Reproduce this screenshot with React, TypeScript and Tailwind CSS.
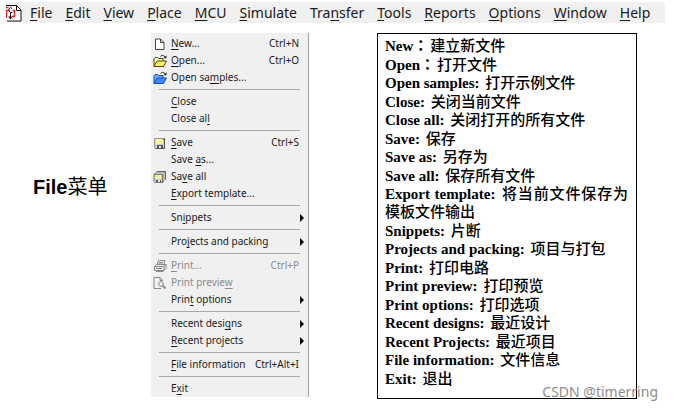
import type { ReactNode } from 'react';
import { clsx } from 'clsx';

interface MenuEntry {
  label: string;
  // position of the underlined access key
  mnemonic: number;
  icon?: ReactNode;
  shortcut?: string;
  submenu?: boolean;
  disabled?: boolean;
}

const NewIcon = () => (
  <svg viewBox="0 0 14 14" className="size-3.5">
    <path d="M2.500 2H7.500L11 5.500V12.500H2.500Z" fill="#fff" stroke="#444" />
    <path d="M7.500 2V5.500H11" fill="none" stroke="#444" />
  </svg>
);

const FolderIcon = ({ front, back, line }: { front: string; back: string; line: string }) => (
  <svg viewBox="0 0 14 14" className="size-3.5">
    <path d="M1 12.500V4.500L2 3.500H4.500L5.500 4.500H10V7" fill={back} stroke={line} />
    <path d="M1 12.500L4 7H13.500L10.500 12.500Z" fill={front} stroke={line} />
    <path d="M7.500 2.500C8.500 1 10.500 1 12 2.800" fill="none" stroke="#222" />
    <path d="M13.500 1.200V4.300H10.500Z" fill="#222" />
  </svg>
);

const SaveIcon = () => (
  <svg viewBox="0 0 14 14" className="size-3.5">
    <path d="M1.500 2.500H11.500V12.500H2.500L1.500 11.500Z" fill="#d0d0d0" stroke="#999" />
    <path d="M11.500 2.500V12.500H2.500" fill="none" stroke="#555" />
    <rect x="3" y="3" width="7" height="5" fill="#f7f59a" />
    <rect x="4" y="9" width="6" height="3" fill="#555" />
    <rect x="6" y="10" width="2" height="2" fill="#eee" />
    <rect x="10" y="3" width="1" height="1" fill="#c33" />
  </svg>
);

const SaveAllIcon = () => (
  <svg viewBox="0 0 14 14" className="size-3.5">
    <path d="M1 4.500L4 1.500H12.500V9L9.500 12.500" fill="#999" stroke="#666" />
    <path d="M2.500 3.200H11V11" fill="none" stroke="#ddd" />
    <path d="M1 4.500H9.500V12.500H2L1 11.500Z" fill="#d0d0d0" stroke="#777" />
    <rect x="2" y="5" width="6" height="4" fill="#f7f59a" />
    <rect x="3" y="10" width="5" height="2" fill="#555" />
    <rect x="5" y="10" width="2" height="2" fill="#eee" />
  </svg>
);

const PrintIcon = () => (
  <svg viewBox="0 0 14 14" className="size-3.5" fill="#eee" stroke="#8a8a8a">
    <path d="M4 6L5.500 1.500H12L10.500 6Z" />
    <path d="M6 3.500H10M5.500 5H9.500" />
    <path d="M1.500 7.500L3.500 5.500H13L11 7.500Z" />
    <path d="M1.500 7.500H11V11.500H1.500ZM11 7.500L13 5.500V9.500L11 11.500" />
    <path d="M3 9.500H9M3 12.500H10.500" />
  </svg>
);

const PreviewIcon = () => (
  <svg viewBox="0 0 14 14" className="size-3.5" fill="none" stroke="#8a8a8a">
    <path d="M9.500 5V4L7 1.500H1V12.500H8" />
    <path d="M7 1.500V4.500H9.500" />
    <circle cx="8" cy="8" r="2.300" />
    <path d="M9.800 9.800L12.500 12.500" strokeWidth="2" />
  </svg>
);

const DocumentIcon = () => (
  <svg viewBox="0 0 16 18" className="h-[18px] w-4" fill="none">
    <path d="M0 1.500H10.500L15 6V17H1" fill="#fff" stroke="#111" />
    <path d="M10.500 1.500V6.500H15" stroke="#111" />
    <path d="M0 3.500H2.500M.5 6V14M0 6.500H3M6.500 6.500H8.500V12.500H6" stroke="#ee1c25" strokeWidth="1.500" />
    <path d="M6 4.500L4.500 3.500L3 5V7L4.500 8.500H6.500M4.500 9V13" stroke="#111" />
    <path d="M2 12.500H6.500L4.500 15.500Z" fill="#111" />
  </svg>
);

const menuBar = [
  { label: 'File', mnemonic: 0 },
  { label: 'Edit', mnemonic: 0 },
  { label: 'View', mnemonic: 0 },
  { label: 'Place', mnemonic: 0 },
  { label: 'MCU', mnemonic: 0 },
  { label: 'Simulate', mnemonic: 0 },
  { label: 'Transfer', mnemonic: 3 },
  { label: 'Tools', mnemonic: 0 },
  { label: 'Reports', mnemonic: 0 },
  { label: 'Options', mnemonic: 0 },
  { label: 'Window', mnemonic: 0 },
  { label: 'Help', mnemonic: 0 },
];

const fileMenu: MenuEntry[][] = [
  [
    { label: 'New...', mnemonic: 0, icon: <NewIcon />, shortcut: 'Ctrl+N' },
    {
      label: 'Open...',
      mnemonic: 0,
      icon: <FolderIcon front="#fbf36b" back="#fffbb0" line="#4a4717" />,
      shortcut: 'Ctrl+O',
    },
    {
      label: 'Open samples...',
      mnemonic: 7,
      icon: <FolderIcon front="#3d8bff" back="#6fb0ff" line="#1748b5" />,
    },
  ],
  [
    { label: 'Close', mnemonic: 0 },
    { label: 'Close all', mnemonic: 8 },
  ],
  [
    { label: 'Save', mnemonic: 0, icon: <SaveIcon />, shortcut: 'Ctrl+S' },
    { label: 'Save as...', mnemonic: 5 },
    { label: 'Save all', mnemonic: 2, icon: <SaveAllIcon /> },
    { label: 'Export template...', mnemonic: 0 },
  ],
  [{ label: 'Snippets', mnemonic: 2, submenu: true }],
  [{ label: 'Projects and packing', mnemonic: 3, submenu: true }],
  [
    { label: 'Print...', mnemonic: 0, icon: <PrintIcon />, shortcut: 'Ctrl+P', disabled: true },
    { label: 'Print preview', mnemonic: 12, icon: <PreviewIcon />, disabled: true },
    { label: 'Print options', mnemonic: 4, submenu: true },
  ],
  [
    { label: 'Recent designs', mnemonic: 11, submenu: true },
    { label: 'Recent projects', mnemonic: 0, submenu: true },
  ],
  [{ label: 'File information', mnemonic: 0, shortcut: 'Ctrl+Alt+I' }],
  [{ label: 'Exit', mnemonic: 1 }],
];

const descriptions = [
  ['New：', '建立新文件'],
  ['Open：', '打开文件'],
  ['Open samples: ', '打开示例文件'],
  ['Close: ', '关闭当前文件'],
  ['Close all: ', '关闭打开的所有文件'],
  ['Save: ', '保存'],
  ['Save as: ', '另存为'],
  ['Save all: ', '保存所有文件'],
  ['Export template: ', '将当前文件保存为模板文件输出'],
  ['Snippets: ', '片断'],
  ['Projects and packing: ', '项目与打包'],
  ['Print: ', '打印电路'],
  ['Print preview: ', '打印预览'],
  ['Print options: ', '打印选项'],
  ['Recent designs: ', '最近设计'],
  ['Recent Projects: ', '最近项目'],
  ['File information: ', '文件信息'],
  ['Exit: ', '退出'],
];

function Mnemonic({ label, at }: { label: string; at: number }) {
  return (
    <span className="whitespace-pre">
      {label.slice(0, at)}
      <span className="underline underline-offset-2">{label[at]}</span>
      {label.slice(at + 1)}
    </span>
  );
}

function MenuRow({ label, mnemonic, icon, shortcut, submenu, disabled }: MenuEntry) {
  return (
    <button
      type="button"
      disabled={disabled}
      className={clsx(
        'flex h-[17px] w-full items-center pl-0.5 text-left',
        disabled ? 'text-[#8c8c8c]' : 'text-[#1a1a1a]'
      )}
    >
      <span className="w-[18px] shrink-0">{icon}</span>
      <Mnemonic label={label} at={mnemonic} />
      {shortcut && <span className="ml-auto pr-[9px]">{shortcut}</span>}
      {submenu && (
        <svg viewBox="0 0 4 8" className="mr-1 ml-auto h-2 w-1">
          <path d="M0 0L4 4L0 8Z" fill="#000" />
        </svg>
      )}
    </button>
  );
}

export default function App() {
  return (
    <div className="flex min-h-screen flex-col bg-white pt-0.5 pb-2.5 text-black">
      <nav className="mr-2 ml-1.5 flex h-[21px] items-center bg-[#f0f0f0] font-['Noto_Sans',sans-serif] text-[14px] text-[#1a1a1a]">
        <DocumentIcon />
        <div className="ml-2 flex gap-[13px]">
          {menuBar.map((item) => (
            <button key={item.label} type="button">
              <Mnemonic label={item.label} at={item.mnemonic} />
            </button>
          ))}
        </div>
      </nav>

      <main className="mt-2.5 flex flex-1">
        <h1 className="w-[151px] shrink-0 self-start pt-[139px] pl-[33px] font-['Liberation_Sans','Noto_Sans_CJK_SC',sans-serif] text-[20px] leading-[30px]">
          <b>File</b>菜单
        </h1>

        <div className="w-[158px] shrink-0 self-start border-r border-[#a0a0a0] bg-[#f0f0f0] pt-0.5 font-['Noto_Sans',sans-serif] text-[10px]">
          {fileMenu.map((group, index) => (
            <div key={index}>
              {index > 0 && <hr className="mx-2 my-[3px] border-[#a8a8a8]" />}
              {group.map((entry) => (
                <MenuRow key={entry.label} {...entry} />
              ))}
            </div>
          ))}
        </div>

        <section className="relative mr-9 ml-[68px] flex flex-1 flex-col border border-black">
          <ul className="flex flex-1 flex-col justify-between pt-[3px] pr-2 pb-2.5 pl-[7px] font-['Liberation_Serif','Noto_Sans_CJK_TC',serif] text-[15px] leading-[18px] font-bold">
            {descriptions.map(([term, text]) => (
              <li key={term} className="text-justify">
                {term}
                <span className="ml-0.5 font-['Noto_Sans_CJK_SC',sans-serif] leading-none font-medium">
                  {text}
                </span>
              </li>
            ))}
          </ul>
          <span className="absolute -right-[22px] -bottom-1 font-['Noto_Sans',sans-serif] text-[14px] leading-5 text-[#8c8c8c]">
            CSDN @timerring
          </span>
        </section>
      </main>
    </div>
  );
}
